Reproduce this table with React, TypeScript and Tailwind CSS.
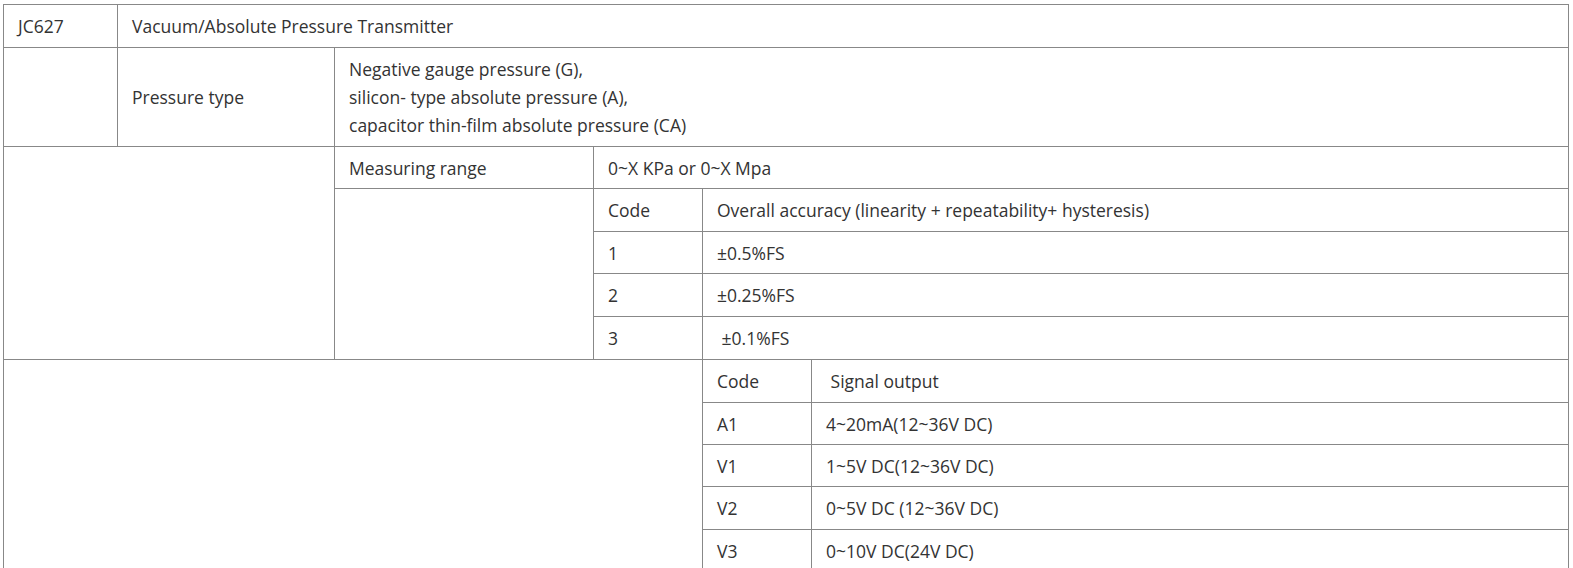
const Cell = ({ className = "", children }: { className?: string; children?: React.ReactNode }) => (
    <div className={`flex items-center border-r border-b border-[#888] pl-[14px] ${className}`}>
        {children}
    </div>
);

const accuracy = [
    ["Code", "Overall accuracy (linearity + repeatability+ hysteresis)", "h-[43px]"],
    ["1", "±0.5%FS", "h-[42px]"],
    ["2", "±0.25%FS", "h-[43px]"],
    ["3", "\u00a0±0.1%FS", "h-[43px]"],
];

const signals = [
    ["Code", "\u00a0Signal output", "h-[43px]"],
    ["A1", "4~20mA(12~36V DC)", "h-[42px]"],
    ["V1", "1~5V DC(12~36V DC)", "h-[42px]"],
    ["V2", "0~5V DC (12~36V DC)", "h-[43px]"],
    ["V3", "0~10V DC(24V DC)", "h-[43px]"],
];

export default function App() {
    return (
        <div className="min-h-screen bg-white pt-[4px] pl-[3px] text-[17.5px] leading-[28px] text-[#333] font-['Open_Sans',sans-serif]">
            <div className="w-[1566px] border-l border-t border-[#888]">
                {/* title */}
                <div className="flex h-[43px]">
                    <Cell className="w-[114px] pl-[12px]">JC627</Cell>
                    <Cell className="flex-1">Vacuum/Absolute Pressure Transmitter</Cell>
                </div>

                {/* pressure type */}
                <div className="flex h-[99px]">
                    <Cell className="w-[114px]" />
                    <Cell className="w-[217px]">Pressure type</Cell>
                    <Cell className="flex-1">
                        <div>
                            <p>Negative gauge pressure (G),</p>
                            <p>silicon- type absolute pressure (A),</p>
                            <p>capacitor thin-film absolute pressure (CA)</p>
                        </div>
                    </Cell>
                </div>

                {/* measuring range + accuracy */}
                <div className="flex">
                    <Cell className="w-[331px]" />
                    <div className="flex w-[259px] flex-col">
                        <Cell className="h-[42px]">Measuring range</Cell>
                        <Cell className="flex-1" />
                    </div>
                    <div className="flex flex-1 flex-col">
                        <Cell className="h-[42px] pl-[13px]">0~X KPa or 0~X Mpa</Cell>
                        {accuracy.map(([code, text, h]) => (
                            <div key={code} className={`flex ${h}`}>
                                <Cell className="w-[109px] pl-[13px]">{code}</Cell>
                                <Cell className="flex-1">{text}</Cell>
                            </div>
                        ))}
                    </div>
                </div>

                {/* signal output */}
                <div className="flex">
                    <Cell className="w-[699px]" />
                    <div className="flex flex-1 flex-col">
                        {signals.map(([code, text, h]) => (
                            <div key={code} className={`flex ${h}`}>
                                <Cell className="w-[109px]">{code}</Cell>
                                <Cell className="flex-1">{text}</Cell>
                            </div>
                        ))}
                    </div>
                </div>
            </div>
        </div>
    );
}
